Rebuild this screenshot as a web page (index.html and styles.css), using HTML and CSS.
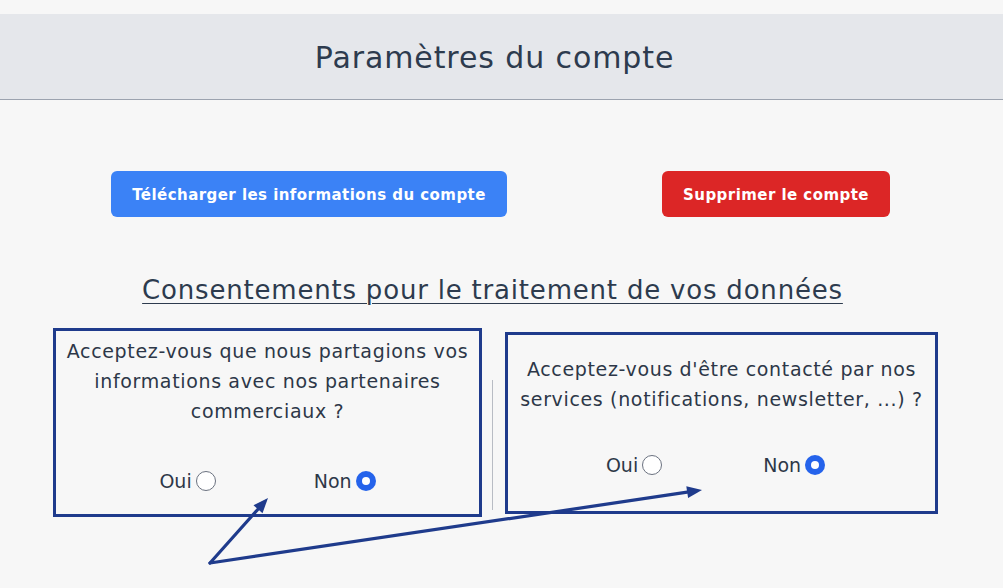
FILE: index.html
```html
<!DOCTYPE html>
<html lang="fr">
<head>
<meta charset="utf-8">
<title>Paramètres du compte</title>
<link rel="stylesheet" href="styles.css">
</head>
<body>
<div class="page">
  <div class="topgap"></div>
  <header class="header"><h1 class="title">Paramètres du compte</h1></header>
  <main class="main">
    <div class="actions">
      <button class="btn btn-blue">Télécharger les informations du compte</button>
      <button class="btn btn-red">Supprimer le compte</button>
    </div>
    <h2 class="consent-title">Consentements pour le traitement de vos données</h2>
    <div class="consents">
      <div class="box box-one">
        <p class="question">Acceptez-vous que nous partagions vos<br>informations avec nos partenaires<br>commerciaux ?</p>
        <div class="choices">
          <label class="choice">Oui <span class="radio"></span></label>
          <label class="choice">Non <span class="radio checked"></span></label>
        </div>
      </div>
      <div class="divider"></div>
      <div class="box box-two">
        <p class="question">Acceptez-vous d'être contacté par nos<br>services (notifications, newsletter, ...) ?</p>
        <div class="choices">
          <label class="choice">Oui <span class="radio"></span></label>
          <label class="choice">Non <span class="radio checked"></span></label>
        </div>
      </div>
    </div>
  </main>
  <svg class="arrows" width="1003" height="588" viewBox="0 0 1003 588">
    <line x1="210" y1="563" x2="258" y2="509.2" stroke="#1f3b8c" stroke-width="3.2" stroke-linecap="round"/>
    <polygon points="268,498 262.5,513.2 253.5,505.2" fill="#1f3b8c"/>
    <line x1="210" y1="563" x2="687.2" y2="492.2" stroke="#1f3b8c" stroke-width="3.2" stroke-linecap="round"/>
    <polygon points="702,490 688.1,498.1 686.3,486.3" fill="#1f3b8c"/>
  </svg>
</div>
</body>
</html>
```
FILE: styles.css
```css
* { box-sizing: border-box; }
html, body {
  margin: 0;
  padding: 0;
  background: #f7f7f7;
}
body {
  font-family: "DejaVu Sans", "Open Sans", sans-serif;
  color: #2d3748;
}
.page {
  position: relative;
  width: 1003px;
  height: 588px;
  overflow: hidden;
}
.topgap { height: 14px; }
.header {
  height: 86px;
  background: #e5e7eb;
  border-bottom: 1px solid #9ca3af;
  display: flex;
  align-items: center;
  justify-content: center;
}
.title {
  margin: 2px 0 0 -14px;
  font-size: 30px;
  font-weight: 400;
  letter-spacing: 0.9px;
  color: #2d3b4e;
  line-height: 1;
}
.main { padding-top: 71px; }
.actions {
  display: flex;
  justify-content: space-between;
  padding: 0 113px 0 111px;
}
.btn {
  height: 46px;
  border: none;
  border-radius: 6px;
  color: #fff;
  font-family: inherit;
  font-size: 15px;
  font-weight: 700;
  letter-spacing: 0.45px;
  padding: 2px 0 0;
}
.btn-blue { background: #3b82f6; width: 396px; }
.btn-red { background: #dc2626; width: 228px; }
.consent-title {
  margin: 55px 0 0 -18px;
  text-align: center;
  font-size: 26px;
  font-weight: 400;
  letter-spacing: 0.8px;
  line-height: 36px;
  text-decoration: underline;
  text-decoration-thickness: 1px;
  text-underline-offset: 4px;
  color: #2d3b4e;
}
.consents {
  display: flex;
  align-items: flex-start;
  margin-top: 20px;
  padding-left: 53px;
}
.box {
  border: 3px solid #1f3b8c;
  text-align: center;
}
.box-one {
  width: 429px;
  height: 189px;
  padding: 5px 0 0;
}
.box-two {
  width: 433px;
  height: 182px;
  margin-top: 4px;
  padding: 19px 0 0;
}
.divider {
  width: 1px;
  height: 130px;
  background: #b8bcc4;
  margin: 52px 12px 0 10px;
}
.question {
  margin: 0;
  font-size: 19px;
  letter-spacing: 0.65px;
  line-height: 30px;
  color: #2d3748;
  white-space: nowrap;
}
.choices {
  display: flex;
  justify-content: center;
  gap: 98px;
  font-size: 19px;
  color: #2d3748;
}
.box-one .choices { margin-top: 40px; }
.box-two .choices { margin-top: 36px; margin-left: -12px; gap: 101px; }
.choice {
  display: flex;
  align-items: center;
  gap: 4px;
  line-height: 30px;
}
.radio {
  width: 20px;
  height: 20px;
  border-radius: 50%;
  border: 1px solid #6b7280;
  background: #fff;
  display: inline-block;
  position: relative;
}
.radio.checked {
  border: none;
  background: #2563eb;
}
.radio.checked::after {
  content: "";
  position: absolute;
  left: 6px;
  top: 6px;
  width: 8px;
  height: 8px;
  border-radius: 50%;
  background: #fff;
}
.arrows {
  position: absolute;
  left: 0;
  top: 0;
  pointer-events: none;
}
```
